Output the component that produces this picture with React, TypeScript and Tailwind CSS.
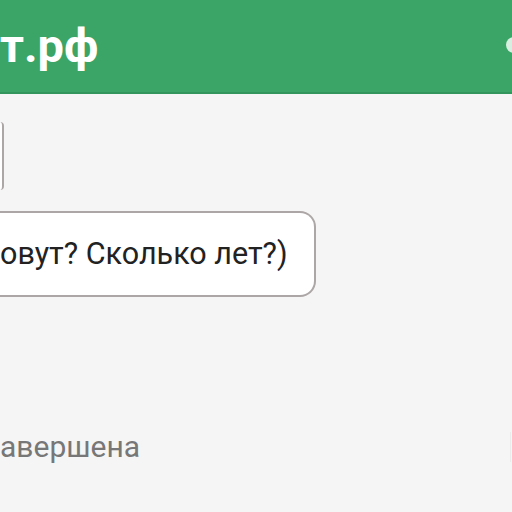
export default function App() {
  return (
    <div
      className="w-[512px] h-[512px] overflow-hidden bg-[#f5f5f5] flex flex-col"
      style={{ fontFamily: "Roboto, 'Noto Sans', sans-serif" }}
    >
      {/* header */}
      <div className="h-[94px] shrink-0 bg-[#3aa566] border-b-2 border-[#33955b] flex items-center justify-between">
        <span className="text-white font-bold text-[47px] leading-none -mt-[2px]">т.рф</span>
        <span className="w-[14px] h-[16px] rounded-l-full bg-[#d8eee0] -mr-[8px] -mt-[2px]" />
      </div>

      {/* messages */}
      <div className="flex flex-col items-start pt-[28px]">
        <div className="w-[4px] h-[68px] bg-white border-r-2 border-[#aca6a6] rounded-r-[10px]" />
        <div className="mt-[21px] h-[86px] bg-white border-2 border-l-0 border-[#aca6a6] rounded-r-[16px] flex items-center pr-[26px]">
          <span className="text-[30.5px] text-[#222] leading-none">овут? Сколько лет?)</span>
        </div>
      </div>

      <div className="mt-[135px] flex items-center justify-between">
        <span className="text-[30px] text-[#777] leading-none">авершена</span>
        <span className="w-[3px] h-[30px] border-l border-[#ebebeb] -mr-[1px]" />
      </div>
    </div>
  );
}
